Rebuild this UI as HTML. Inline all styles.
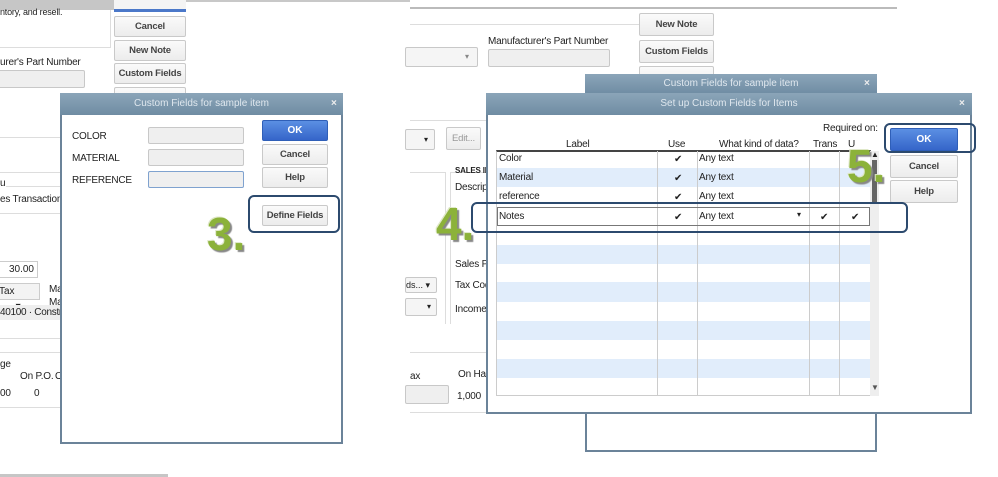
<!DOCTYPE html>
<html><head><style>
*{margin:0;padding:0;box-sizing:border-box}
body{width:998px;height:477px;position:relative;overflow:hidden;background:#fff;font-family:"Liberation Sans",Arial,sans-serif;font-size:10px;color:#222}
.a{position:absolute}
.t{position:absolute;white-space:nowrap;font-size:10px;color:#222;letter-spacing:-0.2px}
.btn{position:absolute;border:1px solid #c9c9c9;border-radius:2px;background:linear-gradient(#fafafa,#ececec);text-align:center;font-size:9.5px;color:#444;font-weight:bold;letter-spacing:-0.2px;white-space:nowrap}
.ok{position:absolute;border:1px solid #2f5fb8;border-radius:2px;background:linear-gradient(#5b8fe3,#3565c9);text-align:center;color:#fff;font-weight:bold;font-size:10px}
.inp{position:absolute;border:1px solid #c8c8c8;border-radius:2px;background:#efefef}
.hl{position:absolute;border:2px solid #2c4a6e;border-radius:6px}
.title{position:absolute;background:linear-gradient(#8ba5b9,#6f8ca3);color:#dfe7ee;text-align:center;font-size:10px}
.num{position:absolute;font-size:46px;font-weight:bold;color:#8cb23a;text-shadow:2px 2px 1px #888,-1px -1px 0 #dfe8c8;font-family:"Liberation Sans",sans-serif}
.hr{position:absolute;height:1px;background:#ddd}
.chk{position:absolute;font-size:10px}
</style></head><body>
<div class="a" style="left:0;top:0;width:168px;height:10px;background:#c6c6c6"></div>
<div class="a" style="left:168px;top:0;width:242px;height:2px;background:#c8c8c8"></div>
<div class="t" style="left:0;top:7px;font-size:9px">ntory, and resell.</div>
<div class="a" style="left:0;top:10px;width:111px;height:38px;border-right:1px solid #ddd;border-bottom:1px solid #ddd"></div>
<div class="a" style="left:114px;top:0;width:72px;height:12px;border-bottom:3px solid #4b78c9;background:#f4f4f4"></div>
<div class="btn" style="left:114px;top:16px;width:72px;height:21px;line-height:19px">Cancel</div>
<div class="btn" style="left:114px;top:40px;width:72px;height:21px;line-height:19px">New Note</div>
<div class="btn" style="left:114px;top:63px;width:72px;height:21px;line-height:19px">Custom Fields</div>
<div class="btn" style="left:114px;top:87px;width:72px;height:21px"></div>
<div class="t" style="left:0;top:57px">urer's Part Number</div>
<div class="inp" style="left:-3px;top:70px;width:88px;height:18px"></div>
<div class="hr" style="left:0;top:137px;width:60px"></div>
<div class="hr" style="left:0;top:172px;width:60px"></div>
<div class="t" style="left:0;top:178px">u</div>
<div class="hr" style="left:6px;top:186px;width:54px"></div>
<div class="t" style="left:0;top:194px">es Transactions</div>
<div class="hr" style="left:0;top:213px;width:60px"></div>
<div class="a" style="left:-2px;top:261px;width:40px;height:17px;border:1px solid #ccc;text-align:right;padding-right:3px;line-height:15px">30.00</div>
<div class="a" style="left:-2px;top:283px;width:42px;height:17px;border:1px solid #ccc;line-height:15px;background:#f3f3f3">Tax &nbsp;&nbsp;&nbsp;&nbsp;&nbsp;&nbsp;▾</div>
<div class="t" style="left:49px;top:284px">Ma</div>
<div class="t" style="left:49px;top:297px">Ma</div>
<div class="a" style="left:0;top:305px;width:60px;height:15px;background:#eee;line-height:15px;white-space:nowrap;overflow:hidden;letter-spacing:-0.3px">40100 · Construct</div>
<div class="hr" style="left:0;top:338px;width:60px"></div>
<div class="hr" style="left:0;top:352px;width:60px"></div>
<div class="t" style="left:0;top:359px">ge</div>
<div class="t" style="left:20px;top:371px">On P.O.</div>
<div class="t" style="left:55px;top:371px">O</div>
<div class="t" style="left:0;top:388px">00</div>
<div class="t" style="left:34px;top:388px">0</div>
<div class="hr" style="left:0;top:407px;width:60px"></div>
<div class="a" style="left:0;top:474px;width:168px;height:3px;background:#c6c6c6"></div>

<div class="a" style="left:60px;top:93px;width:283px;height:351px;border:2px solid #6b8399;background:#fff"></div>
<div class="title" style="left:60px;top:93px;width:283px;height:22px;line-height:22px">Custom Fields for sample item</div>
<div class="t" style="left:331px;top:98px;color:#eee;font-weight:bold">×</div>
<div class="t" style="left:72px;top:131px">COLOR</div>
<div class="t" style="left:72px;top:153px">MATERIAL</div>
<div class="t" style="left:72px;top:175px">REFERENCE</div>
<div class="inp" style="left:148px;top:127px;width:96px;height:17px"></div>
<div class="inp" style="left:148px;top:149px;width:96px;height:17px"></div>
<div class="inp" style="left:148px;top:171px;width:96px;height:17px;border-color:#7fa2cf"></div>
<div class="ok" style="left:262px;top:120px;width:66px;height:21px;line-height:19px">OK</div>
<div class="btn" style="left:262px;top:144px;width:66px;height:21px;line-height:19px">Cancel</div>
<div class="btn" style="left:262px;top:167px;width:66px;height:21px;line-height:19px">Help</div>
<div class="btn" style="left:262px;top:205px;width:66px;height:21px;line-height:19px">Define Fields</div>
<div class="hl" style="left:248px;top:195px;width:92px;height:38px"></div>
<div class="num" style="left:207px;top:207px">3.</div>

<div class="a" style="left:410px;top:0;width:487px;height:9px;border-bottom:2px solid #bbb;background:#fff"></div>
<div class="hr" style="left:410px;top:24px;width:230px"></div>
<div class="t" style="left:488px;top:36px">Manufacturer's Part Number</div>
<div class="inp" style="left:488px;top:49px;width:122px;height:18px"></div>
<div class="inp" style="left:405px;top:47px;width:73px;height:20px;background:#f5f5f5;text-align:right;padding-right:8px;font-size:8px;line-height:18px;color:#888">▾</div>
<div class="btn" style="left:639px;top:13px;width:75px;height:23px;line-height:21px">New Note</div>
<div class="btn" style="left:639px;top:40px;width:75px;height:23px;line-height:21px">Custom Fields</div>
<div class="btn" style="left:639px;top:66px;width:75px;height:20px"></div>
<div class="hr" style="left:410px;top:120px;width:80px"></div>
<div class="inp" style="left:405px;top:129px;width:30px;height:21px;background:#f5f5f5;font-size:8px;line-height:19px;text-align:right;padding-right:6px">▾</div>
<div class="btn" style="left:446px;top:127px;width:35px;height:23px;line-height:21px;color:#999;font-weight:normal">Edit...</div>
<div class="a" style="left:410px;top:172px;width:36px;height:152px;border-right:1px solid #ddd;border-top:1px solid #ddd"></div>
<div class="a" style="left:450px;top:172px;width:40px;height:152px;border-left:1px solid #ddd;border-top:1px solid #ddd"></div>
<div class="t" style="left:455px;top:166px;font-size:8px;font-weight:bold">SALES IN</div>
<div class="t" style="left:455px;top:182px">Descripti</div>
<div class="t" style="left:455px;top:259px">Sales Pr</div>
<div class="t" style="left:455px;top:280px">Tax Code</div>
<div class="t" style="left:455px;top:304px">Income A</div>
<div class="inp" style="left:405px;top:277px;width:32px;height:16px;background:#f5f5f5;line-height:14px;font-size:9px">ds... ▾</div>
<div class="inp" style="left:405px;top:298px;width:32px;height:18px;background:#f5f5f5;text-align:right;padding-right:5px;font-size:8px;line-height:16px">▾</div>
<div class="hr" style="left:410px;top:352px;width:80px"></div>
<div class="t" style="left:410px;top:371px">ax</div>
<div class="t" style="left:458px;top:369px">On Han</div>
<div class="inp" style="left:405px;top:385px;width:44px;height:19px"></div>
<div class="t" style="left:457px;top:391px">1,000</div>
<div class="hr" style="left:410px;top:412px;width:80px"></div>

<div class="a" style="left:585px;top:74px;width:292px;height:378px;border:2px solid #6b8399;background:#fff"></div>
<div class="title" style="left:585px;top:74px;width:292px;height:20px;line-height:20px">Custom Fields for sample item</div>
<div class="t" style="left:864px;top:78px;color:#eee;font-weight:bold">×</div>

<div class="a" style="left:486px;top:93px;width:486px;height:321px;border:2px solid #6b8399;background:#fff"></div>
<div class="title" style="left:486px;top:93px;width:486px;height:22px;line-height:22px">Set up Custom Fields for Items</div>
<div class="t" style="left:959px;top:98px;color:#eee;font-weight:bold">×</div>
<div class="t" style="left:823px;top:123px">Required on:</div>
<div class="t" style="left:566px;top:139px">Label</div>
<div class="t" style="left:668px;top:139px">Use</div>
<div class="t" style="left:719px;top:139px">What kind of data?</div>
<div class="t" style="left:813px;top:139px">Trans</div>
<div class="t" style="left:848px;top:139px">U</div>
<div class="a" style="left:496px;top:150px;width:375px;height:246px;border:1px solid #ccc;border-top:2px solid #444;background:#fff"></div>
<div class="a" style="left:497px;top:168px;width:373px;height:19px;background:#e1edfb"></div>
<div class="a" style="left:497px;top:245px;width:373px;height:19px;background:#e1edfb"></div>
<div class="a" style="left:497px;top:282px;width:373px;height:20px;background:#e1edfb"></div>
<div class="a" style="left:497px;top:321px;width:373px;height:19px;background:#e1edfb"></div>
<div class="a" style="left:497px;top:359px;width:373px;height:19px;background:#e1edfb"></div>
<div class="a" style="left:657px;top:151px;width:1px;height:245px;background:#ccc"></div>
<div class="a" style="left:697px;top:151px;width:1px;height:245px;background:#ccc"></div>
<div class="a" style="left:809px;top:151px;width:1px;height:245px;background:#ccc"></div>
<div class="a" style="left:839px;top:151px;width:1px;height:245px;background:#ccc"></div>
<div class="a" style="left:870px;top:151px;width:9px;height:245px;background:#eee"></div>
<div class="a" style="left:872px;top:160px;width:5px;height:42px;background:#666"></div>
<div class="t" style="left:871px;top:150px;font-size:8px">▲</div>
<div class="t" style="left:871px;top:383px;font-size:8px;color:#555">▼</div>
<div class="t" style="left:499px;top:153px">Color</div>
<div class="t" style="left:499px;top:172px">Material</div>
<div class="t" style="left:499px;top:191px">reference</div>
<div class="t" style="left:699px;top:153px">Any text</div>
<div class="t" style="left:699px;top:172px">Any text</div>
<div class="t" style="left:699px;top:191px">Any text</div>
<div class="chk" style="left:674px;top:154px">✔</div>
<div class="chk" style="left:674px;top:173px">✔</div>
<div class="chk" style="left:674px;top:192px">✔</div>
<div class="a" style="left:497px;top:207px;width:373px;height:19px;border:1px solid #777"></div>
<div class="t" style="left:499px;top:211px">Notes</div>
<div class="chk" style="left:674px;top:212px">✔</div>
<div class="t" style="left:699px;top:211px">Any text</div>
<div class="t" style="left:797px;top:210px;font-size:8px">▾</div>
<div class="chk" style="left:820px;top:212px">✔</div>
<div class="chk" style="left:851px;top:212px">✔</div>
<div class="ok" style="left:890px;top:128px;width:68px;height:23px;line-height:21px">OK</div>
<div class="btn" style="left:890px;top:155px;width:68px;height:23px;line-height:21px">Cancel</div>
<div class="btn" style="left:890px;top:180px;width:68px;height:23px;line-height:21px">Help</div>
<div class="hl" style="left:884px;top:123px;width:92px;height:30px"></div>
<div class="hl" style="left:471px;top:202px;width:437px;height:31px"></div>
<div class="num" style="left:436px;top:197px">4.</div>
<div class="num" style="left:847px;top:139px">5.</div>
</body></html>
